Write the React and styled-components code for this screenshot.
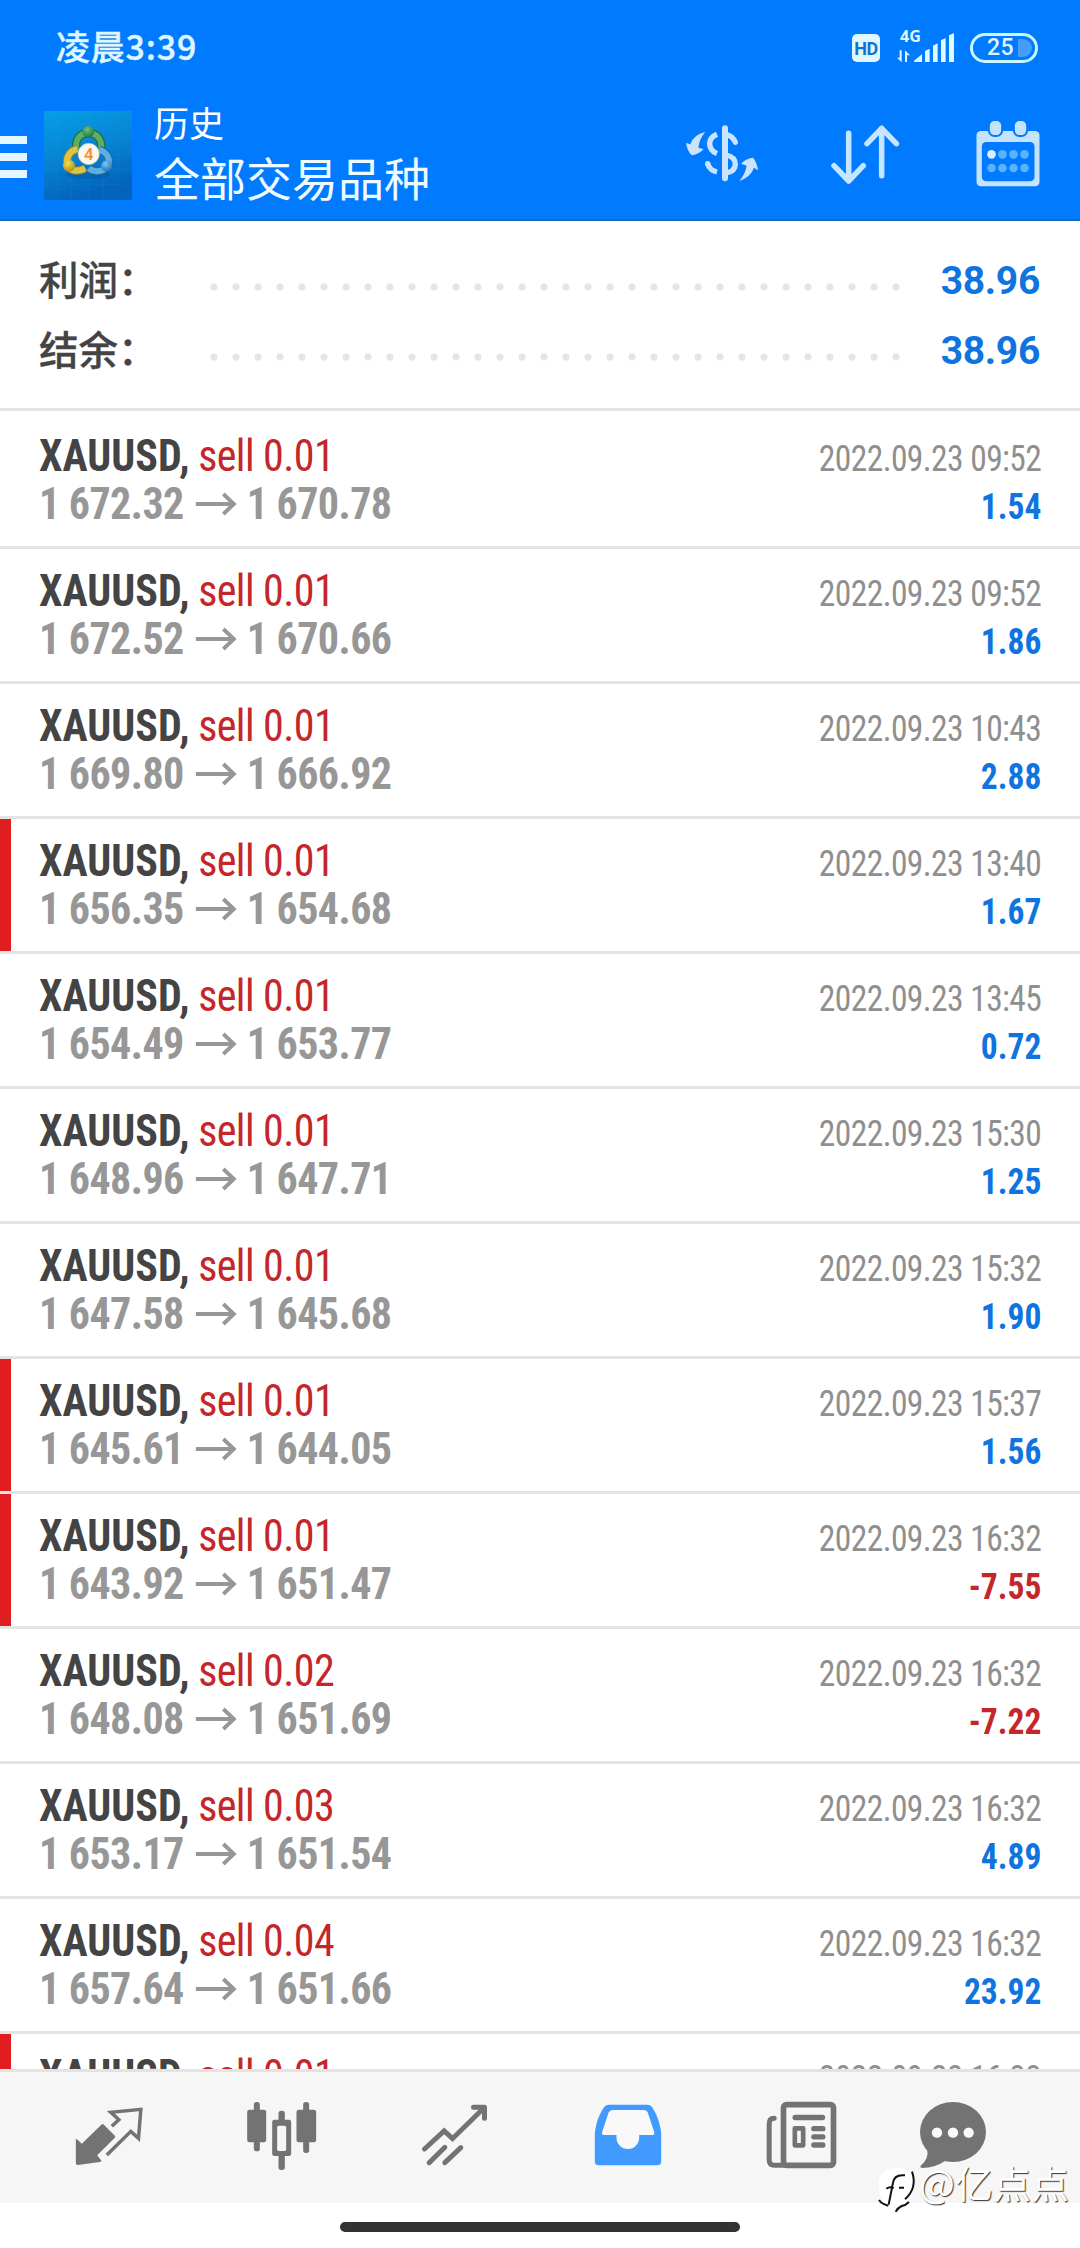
import React from 'react';
import styled, { createGlobalStyle } from 'styled-components';

const GlobalStyle = createGlobalStyle`
  * {
    box-sizing: border-box;
  }
  body {
    margin: 0;
    background: #fff;
    font-family: Roboto, 'Noto Sans CJK SC', sans-serif;
  }
`;

const Screen = styled.div`
  position: relative;
  display: flex;
  flex-direction: column;
  width: 1080px;
  height: 2248px;
  overflow: hidden;
  background: #fff;
`;

const Header = styled.header`
  flex: none;
  height: 221px;
  background: #007aff;
  border-bottom: 2px solid #1a6ab8;
`;

const StatusBar = styled.div`
  display: flex;
  align-items: center;
  justify-content: space-between;
  height: 95px;
  padding: 0 42px 0 56px;
`;

const Clock = styled.span`
  margin-top: -3px;
  font-family: 'Noto Sans CJK SC', sans-serif;
  font-size: 34px;
  font-weight: 500;
  line-height: 40px;
  letter-spacing: 0.8px;
  color: #dff5ff;
  -webkit-text-stroke: 0.4px #dff5ff;
`;

const StatusIcons = styled.div`
  display: flex;
  align-items: center;
`;

const HdBadge = styled.span`
  width: 28px;
  height: 28px;
  margin-right: 17px;
  border-radius: 5px;
  background: #e0f7ff;
  color: #1272d4;
  font: 700 18px/29px Roboto, sans-serif;
  letter-spacing: -0.4px;
  text-align: center;
`;

const SignalBox = styled.span`
  position: relative;
  width: 58px;
  height: 34px;
  margin: -3px 15px 0 0;
  svg {
    display: block;
  }
`;

const NetType = styled.span`
  position: absolute;
  left: 3px;
  top: -1px;
  color: #dff9ff;
  font: 700 16px/16px 'Open Sans', sans-serif;
`;

const Battery = styled.span`
  display: flex;
  align-items: center;
  width: 68px;
  height: 30px;
  padding-left: 14px;
  border: 3px solid #c9f6ff;
  border-radius: 15px;
  color: #dff5ff;
  font: 500 23px/24px Roboto, sans-serif;
  letter-spacing: 0.5px;
`;

const BatteryLeft = styled.span`
  width: 14px;
  height: 18px;
  margin-left: 4px;
  border-radius: 1px 9px 9px 1px;
  background: #459dfa;
`;

const TitleBar = styled.div`
  display: flex;
  align-items: flex-start;
  height: 124px;
  padding: 7px 32px 0 0;
`;

const MenuButton = styled.div`
  display: flex;
  flex-direction: column;
  gap: 9px;
  width: 44px;
  padding-top: 34px;
`;

const MenuLine = styled.span`
  width: 27px;
  height: 8px;
  background: #e2f6ff;
`;

const Logo = styled.svg`
  width: 88px;
  height: 89px;
  margin-top: 9px;
`;

const Titles = styled.div`
  flex: 1;
  margin-top: -1px;
  padding-left: 22px;
  color: #fff;
  font-family: 'Noto Sans CJK SC', sans-serif;
`;

const Subtitle = styled.div`
  font-size: 35px;
  font-weight: 400;
  line-height: 42px;
`;

const Title = styled.div`
  margin-top: 5px;
  font-size: 46px;
  font-weight: 400;
  line-height: 56px;
  color: #effcff;
`;

const Actions = styled.div`
  display: flex;
  gap: 63px;
  padding-top: 13px;
`;

const ActionIcon = styled.svg`
  width: 80px;
  height: 80px;
`;

const Summary = styled.section`
  flex: none;
  height: 190px;
  padding-top: 24px;
  border-bottom: 3px solid #e4e4e4;
`;

const SummaryRow = styled.div`
  display: flex;
  align-items: center;
  height: 70px;
  padding: 0 40px 0 39px;
`;

const SummaryLabel = styled.span`
  width: 164px;
  margin-top: -5px;
  color: #444;
  font: 500 39.5px/60px 'Noto Sans CJK SC', sans-serif;
  -webkit-text-stroke: 0.3px #444;
`;

const DotLine = styled.span`
  width: 704px;
  height: 22px;
  margin-top: 14px;
  background: radial-gradient(circle, #e5e5e5 3.2px, transparent 4px) 0 0 / 22px 22px;
`;

const SummaryValue = styled.span`
  flex: 1;
  padding-top: 2px;
  color: #0f74e0;
  font-size: 39px;
  font-weight: 700;
  letter-spacing: -0.3px;
  text-align: right;
`;

const List = styled.main`
  flex: 1;
  min-height: 0;
  padding-top: 3px;
  overflow: hidden;
`;

const Deal = styled.div`
  display: flex;
  justify-content: space-between;
  height: 135px;
  padding: 18px 39px 0 39px;
  border-bottom: 3px solid #e4e4e4;
  box-shadow: inset 11px 0 0 ${({ $marked }) => ($marked ? '#e01e20' : 'transparent')};
  font-family: 'Roboto Condensed', Roboto, sans-serif;
  font-stretch: 75%;
`;

const DealInfo = styled.div`
  transform: scaleX(0.955);
  transform-origin: left;
`;

const DealResult = styled.div`
  text-align: right;
  transform: scaleX(0.93);
  transform-origin: right;
`;

const DealLine = styled.div`
  display: flex;
  align-items: center;
  height: 48px;
  font-size: 44px;
  font-weight: 700;
  line-height: 48px;
  letter-spacing: ${({ $muted }) => ($muted ? '-0.6px' : '0')};
  white-space: pre;
  color: ${({ $muted }) => ($muted ? '#979797' : '#444')};
`;

const Side = styled.span`
  margin-left: -1px;
  font-weight: 400;
  letter-spacing: -0.6px;
  color: #c4262a;
`;

const Arrow = styled.svg`
  width: 44px;
  height: 24px;
  margin: 0 10px 0 12px;
`;

const Time = styled.div`
  height: 48px;
  padding-top: 3px;
  color: #8f8f8f;
  font-size: 36px;
  line-height: 48px;
  letter-spacing: -0.6px;
`;

const Profit = styled.div`
  height: 48px;
  padding-top: 3px;
  color: ${({ $loss }) => ($loss ? '#c4262a' : '#0f74e0')};
  font-size: 36px;
  font-weight: 700;
  line-height: 48px;
`;

const Nav = styled.nav`
  flex: none;
  display: flex;
  height: 134px;
  padding: 28px 0 0 22px;
  border-top: 3px solid #e3e3e3;
  background: #f6f6f6;
`;

const NavItem = styled.div`
  display: flex;
  justify-content: center;
  width: ${({ $last }) => ($last ? '132px' : '173px')};
  svg {
    width: 72px;
    height: 72px;
  }
`;

const HomeArea = styled.footer`
  flex: none;
  display: flex;
  justify-content: center;
  height: 45px;
  padding-top: 19px;
`;

const HomeBar = styled.span`
  width: 400px;
  height: 10px;
  border-radius: 5px;
  background: #323232;
`;

const Watermark = styled.div`
  position: absolute;
  left: 877px;
  top: 2157px;
  display: flex;
  align-items: flex-start;
  color: #fff;
  font: 400 38px/50px 'Noto Sans CJK SC', sans-serif;
  text-shadow: 1px 1px 1px #333;
  white-space: nowrap;
  svg {
    width: 42px;
    height: 50px;
    margin-top: 9px;
  }
`;

const deals = [
  { volume: '0.01', open: '1 672.32', close: '1 670.78', time: '2022.09.23 09:52', profit: '1.54' },
  { volume: '0.01', open: '1 672.52', close: '1 670.66', time: '2022.09.23 09:52', profit: '1.86' },
  { volume: '0.01', open: '1 669.80', close: '1 666.92', time: '2022.09.23 10:43', profit: '2.88' },
  { volume: '0.01', open: '1 656.35', close: '1 654.68', time: '2022.09.23 13:40', profit: '1.67', marked: true },
  { volume: '0.01', open: '1 654.49', close: '1 653.77', time: '2022.09.23 13:45', profit: '0.72' },
  { volume: '0.01', open: '1 648.96', close: '1 647.71', time: '2022.09.23 15:30', profit: '1.25' },
  { volume: '0.01', open: '1 647.58', close: '1 645.68', time: '2022.09.23 15:32', profit: '1.90' },
  { volume: '0.01', open: '1 645.61', close: '1 644.05', time: '2022.09.23 15:37', profit: '1.56', marked: true },
  { volume: '0.01', open: '1 643.92', close: '1 651.47', time: '2022.09.23 16:32', profit: '-7.55', marked: true },
  { volume: '0.02', open: '1 648.08', close: '1 651.69', time: '2022.09.23 16:32', profit: '-7.22' },
  { volume: '0.03', open: '1 653.17', close: '1 651.54', time: '2022.09.23 16:32', profit: '4.89' },
  { volume: '0.04', open: '1 657.64', close: '1 651.66', time: '2022.09.23 16:32', profit: '23.92' },
  { volume: '0.01', open: '1 651.66', close: '1 650.10', time: '2022.09.23 16:33', profit: '1.56', marked: true },
];

const summary = [
  { label: '利润：', value: '38.96' },
  { label: '结余：', value: '38.96' },
];

function AppLogo() {
  return (
    <Logo viewBox='0 0 264 267'>
      <defs>
        <linearGradient id='logoBg' x1='0' y1='0' x2='0.3' y2='1'>
          <stop offset='0' stopColor='#059fe6' />
          <stop offset='0.55' stopColor='#0782d2' />
          <stop offset='1' stopColor='#0363bd' />
        </linearGradient>
        <radialGradient id='green' cx='0.4' cy='0.3' r='0.8'>
          <stop offset='0' stopColor='#6fc07a' />
          <stop offset='1' stopColor='#13703f' />
        </radialGradient>
        <radialGradient id='gold' cx='0.4' cy='0.3' r='0.8'>
          <stop offset='0' stopColor='#f3dc55' />
          <stop offset='1' stopColor='#a08a10' />
        </radialGradient>
        <radialGradient id='sky' cx='0.4' cy='0.3' r='0.8'>
          <stop offset='0' stopColor='#7cc8f2' />
          <stop offset='1' stopColor='#1569ad' />
        </radialGradient>
      </defs>
      <rect width='264' height='267' fill='url(#logoBg)' />
      <path
        d='M40 0V267M82 0V267M133 0V267M178 0V267M222 0V267M0 42H264M0 86H264M0 131H264M0 176H264M0 220H264'
        stroke='#3ab5ec'
        strokeOpacity='0.16'
        strokeWidth='2'
      />
      <ellipse cx='132' cy='190' rx='68' ry='14' fill='#04508f' opacity='0.35' />
      <path d='M98 118C90 82 112 66 133 66C158 66 178 86 170 120' fill='none' stroke='#1c6b45' strokeWidth='25' />
      <path d='M98 118C90 82 112 66 133 66C158 66 178 86 170 120' fill='none' stroke='#5aaf60' strokeWidth='18' />
      <path d='M100 114C72 120 64 148 72 166C82 182 106 182 124 172' fill='none' stroke='#8b8428' strokeWidth='25' />
      <path d='M100 114C72 120 64 148 72 166C82 182 106 182 124 172' fill='none' stroke='#dcc545' strokeWidth='19' />
      <path d='M166 116C194 126 200 150 190 166C178 184 148 184 134 172' fill='none' stroke='#176aa9' strokeWidth='25' />
      <path d='M166 116C194 126 200 150 190 166C178 184 148 184 134 172' fill='none' stroke='#5eafe0' strokeWidth='18' />
      <circle cx='133' cy='62' r='17' fill='url(#green)' />
      <circle cx='75' cy='164' r='18' fill='url(#gold)' />
      <circle cx='188' cy='165' r='17' fill='url(#sky)' />
      <circle cx='134' cy='129' r='32' fill='#fbf8f2' stroke='#bcb69f' strokeWidth='2' />
      <text x='134' y='147' textAnchor='middle' fontFamily='Roboto' fontSize='50' fontWeight='500' fill='#f08a2c'>
        4
      </text>
    </Logo>
  );
}

function CurrencyIcon() {
  return (
    <ActionIcon viewBox='66 285 240 240' fill='none' stroke='#c9e4fc' strokeWidth='16'>
      <path d='M195 325V475' strokeWidth='18' strokeLinecap='round' />
      <path d='M171 343Q149 352 149 372Q150 392 171 401' />
      <path d='M197 343Q218 347 226 367' strokeLinecap='round' />
      <path d='M143 431Q149 451 171 456' />
      <circle cx='143' cy='431' r='8' fill='#c9e4fc' stroke='none' />
      <path d='M199 405Q226 411 226 433Q226 454 199 459' />
      <path
        d='M136 336Q100 344 91 373L78 369Q82 393 95 406Q113 405 131 388L115 383Q119 354 136 336Z'
        fill='#c9e4fc'
        stroke='none'
      />
      <path
        d='M238 483Q273 470 282 443L294 451Q291 427 279 413Q260 414 243 431L260 437Q256 461 238 483Z'
        fill='#c9e4fc'
        stroke='none'
      />
    </ActionIcon>
  );
}

function SortIcon() {
  return (
    <ActionIcon
      viewBox='495 285 240 240'
      fill='none'
      stroke='#c4e6ff'
      strokeWidth='16.5'
      strokeLinecap='round'
      strokeLinejoin='round'
    >
      <path d='M566 340V482M522 437L566 483L610 437' />
      <path d='M665 467V325M621 371L665 325L709 371' />
    </ActionIcon>
  );
}

function CalendarIcon() {
  return (
    <ActionIcon viewBox='925.5 285 240 240'>
      <rect x='951' y='333' width='189' height='166' rx='13' fill='#c6e3fc' />
      <rect x='967' y='366' width='158' height='118' rx='13' fill='#007aff' />
      {[991, 1066].map((x) => (
        <rect key={x} x={x - 3} y='300' width='40' height='48' rx='17' fill='#c6e3fc' stroke='#007aff' strokeWidth='6' />
      ))}
      {[403, 444].map((y) =>
        [996, 1029, 1062, 1095].map((x) => (
          <circle key={`${x}-${y}`} cx={x} cy={y} r='13' fill={x === 996 && y === 403 ? '#d4efff' : '#5ab3fd'} />
        ))
      )}
    </ActionIcon>
  );
}

function SignalIcon() {
  return (
    <svg width='58' height='34' viewBox='711 24 174 102' fill='#dff9ff'>
      <path d='M762 123V119L786 100V123Z' />
      <path d='M795 123V90L809 83V123ZM819 123V74L833 67V123ZM843 123V58L857 51V123ZM867 123V43L882 36V123Z' />
      <path d='M719 88H725V124L711 110H719ZM735 123V88L750 103H741V123Z' />
    </svg>
  );
}

function QuotesIcon() {
  return (
    <svg viewBox='217.5 300 216 216'>
      <path
        d='M226 417Q228 415 244 431L304 373Q307 371 310 374L343 407Q345 410 343 413L290 466L303 482Q303 485 298 486L232 495Q226 495 226 490Z'
        fill='#737373'
      />
      <path
        d='M334 379L355 359L331 337L421 328L414 415L391 394L319 465'
        fill='none'
        stroke='#737373'
        strokeWidth='10.5'
      />
    </svg>
  );
}

function ChartIcon() {
  return (
    <svg viewBox='736.5 300 216 216' fill='#737373'>
      <rect x='760' y='306' width='18' height='148' rx='8' />
      <rect x='740' y='329' width='57' height='98' rx='7' />
      <rect x='908' y='306' width='18' height='153' rx='8' />
      <rect x='888' y='329' width='59' height='98' rx='7' />
      <rect x='834' y='332' width='19' height='178' rx='8' />
      <rect x='815' y='359' width='57' height='109' rx='7' />
      <rect x='830' y='377' width='27' height='76' rx='5' fill='#f6f6f6' />
    </svg>
  );
}

function TradeIcon() {
  return (
    <svg viewBox='1255.5 300 216 216' fill='none' stroke='#737373' strokeWidth='15' strokeLinecap='round'>
      <path d='M1272 447L1331 393L1356 416L1450 324' strokeLinejoin='miter' />
      <path d='M1419 322H1452V355' strokeLinejoin='round' />
      <path d='M1286 488L1333 442M1333 488L1381 443' />
    </svg>
  );
}

function HistoryIcon() {
  return (
    <svg viewBox='154.5 300 216 216'>
      <path
        d='M163 400C166 368 177 340 192 320Q197 314 205 314H320Q329 314 334 320C348 341 359 368 362 400V484Q362 496 350 496H175Q163 496 163 484Z'
        fill='#419bfe'
      />
      <path
        d='M217 330H309Q319 330 322 338L341 396Q343 405 336 405H296V413A34 34 0 0 1 228 413V405H191Q182 405 185 396L204 338Q208 330 217 330Z'
        fill='#f9f9f9'
      />
    </svg>
  );
}

function NewsIcon() {
  return (
    <svg viewBox='673.5 300 216 216' fill='none' stroke='#737373' strokeWidth='16' strokeLinecap='round'>
      <rect x='729' y='314' width='150' height='182' rx='9' strokeWidth='17' />
      <path d='M701 355Q686 355 686 372V480Q686 496 702 496H729' strokeWidth='15' />
      <path d='M764 352.5H846M820 386H847M820 410.5H847M820 435H847' />
      <rect x='763' y='385' width='25' height='51' strokeWidth='14' strokeLinejoin='round' />
    </svg>
  );
}

function ChatIcon() {
  return (
    <svg viewBox='231 120 216 216' fill='#737373'>
      <ellipse cx='339' cy='216' rx='99' ry='90' />
      <path d='M262 270Q267 297 242 317Q239 323 247 324Q284 324 315 303Z' />
      {[291, 339, 386].map((x) => (
        <circle key={x} cx={x} cy='218' r='15.5' fill='#f9f9f9' />
      ))}
    </svg>
  );
}

function DealRow({ item }) {
  return (
    <Deal $marked={item.marked}>
      <DealInfo>
        <DealLine>
          XAUUSD, <Side>sell {item.volume}</Side>
        </DealLine>
        <DealLine $muted>
          {item.open}
          <Arrow viewBox='0 0 44 24' fill='none' stroke='#979797' strokeWidth='4'>
            <path d='M0 12H41M29 2L40 12L29 22' />
          </Arrow>
          {item.close}
        </DealLine>
      </DealInfo>
      <DealResult>
        <Time>{item.time}</Time>
        <Profit $loss={item.profit.startsWith('-')}>{item.profit}</Profit>
      </DealResult>
    </Deal>
  );
}

function App() {
  return (
    <Screen>
      <GlobalStyle />
      <Header>
        <StatusBar>
          <Clock>凌晨3:39</Clock>
          <StatusIcons>
            <HdBadge>HD</HdBadge>
            <SignalBox>
              <NetType>4G</NetType>
              <SignalIcon />
            </SignalBox>
            <Battery>
              25
              <BatteryLeft />
            </Battery>
          </StatusIcons>
        </StatusBar>
        <TitleBar>
          <MenuButton>
            <MenuLine />
            <MenuLine />
            <MenuLine />
          </MenuButton>
          <AppLogo />
          <Titles>
            <Subtitle>历史</Subtitle>
            <Title>全部交易品种</Title>
          </Titles>
          <Actions>
            <CurrencyIcon />
            <SortIcon />
            <CalendarIcon />
          </Actions>
        </TitleBar>
      </Header>
      <Summary>
        {summary.map((row) => (
          <SummaryRow key={row.label}>
            <SummaryLabel>{row.label}</SummaryLabel>
            <DotLine />
            <SummaryValue>{row.value}</SummaryValue>
          </SummaryRow>
        ))}
      </Summary>
      <List>
        {deals.map((item, i) => (
          <DealRow key={i} item={item} />
        ))}
      </List>
      <Nav>
        <NavItem>
          <QuotesIcon />
        </NavItem>
        <NavItem>
          <ChartIcon />
        </NavItem>
        <NavItem>
          <TradeIcon />
        </NavItem>
        <NavItem>
          <HistoryIcon />
        </NavItem>
        <NavItem>
          <NewsIcon />
        </NavItem>
        <NavItem $last>
          <ChatIcon />
        </NavItem>
      </Nav>
      <HomeArea>
        <HomeBar />
      </HomeArea>
      <Watermark>
        <svg viewBox='0 0 126 150'>
          <path d='M4 46Q12 6 60 6Q106 8 112 46Q114 96 80 112Q64 118 58 134Q56 122 40 122Q8 118 4 46Z' fill='#fff' />
          <path d='M84 28Q52 24 48 50L35 116M28 68Q38 60 50 66M66 65H81' fill='none' stroke='#111' strokeWidth='6' />
          <path
            d='M105 17Q122 66 84 100M96 108Q86 118 74 120Q62 126 56 137M6 102Q14 114 34 119'
            fill='none'
            stroke='#111'
            strokeWidth='6'
          />
        </svg>
        @亿点点
      </Watermark>
    </Screen>
  );
}

export default App;
